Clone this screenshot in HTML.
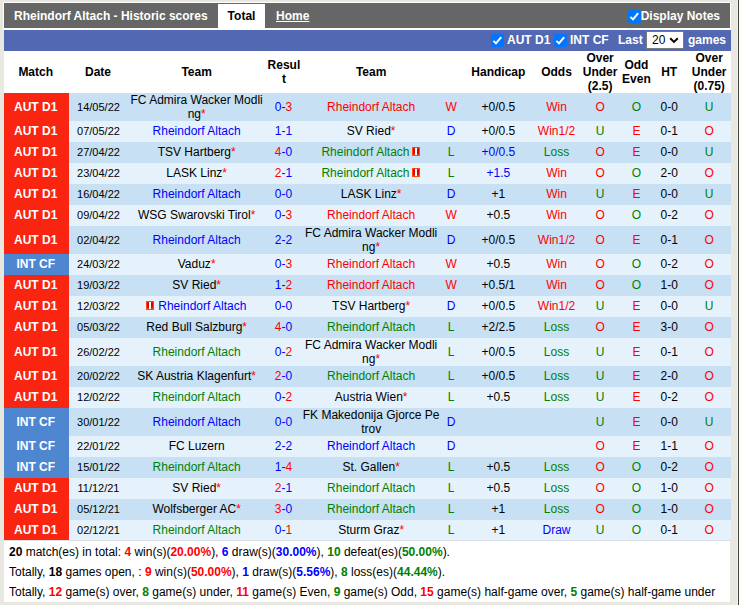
<!DOCTYPE html>
<html><head><meta charset="utf-8"><style>
html,body{margin:0;padding:0;}
body{width:739px;height:605px;background:#e8e8e0;position:relative;overflow:hidden;font-family:"Liberation Sans",sans-serif;font-size:12px;color:#000;}
.edge1{position:absolute;left:737px;top:0;width:1px;height:605px;background:#f4f4ef;}
.edge2{position:absolute;left:738px;top:0;width:1px;height:605px;background:#45453f;}
.tw{position:absolute;left:3px;top:2px;width:728px;height:28px;background:#fff;}
.title{position:absolute;left:4px;top:3px;width:726px;height:25px;background:#666;color:#fff;font-weight:bold;}
.title .nm{position:absolute;left:10px;top:6px;line-height:14px;}
.tab{position:absolute;left:214px;top:1px;width:47px;height:26px;background:#fff;color:#000;text-align:center;line-height:14px;}
.tab span{position:absolute;left:0;right:0;top:5px;}
.home{position:absolute;left:272px;top:6px;line-height:14px;text-decoration:underline;}
.dn{position:absolute;right:10px;top:6px;line-height:14px;}
.cb{display:inline-block;width:13px;height:13px;background:#0075ff;border-radius:2px;vertical-align:top;position:relative;}
.cb svg{position:absolute;left:0;top:0;}
.dn .cb{position:absolute;left:-13px;top:1px;}
.bar{position:absolute;left:4px;top:30px;width:727px;height:21px;background:#5368b3;color:#fff;font-weight:bold;}
.bar .it{position:absolute;top:3px;line-height:14px;}
.sel{position:absolute;left:642px;top:1px;background:#fff;border:1px solid #7a7a7a;box-sizing:border-box;width:38px;height:18px;}
.sel .v{position:absolute;left:5px;top:1px;font-weight:normal;color:#000;line-height:14px;}
.sel svg{position:absolute;left:22px;top:5px;}
table{position:absolute;left:4px;top:51px;width:727px;border-collapse:collapse;table-layout:fixed;}
td,th{padding:0;text-align:center;line-height:14px;vertical-align:middle;}
th{font-weight:bold;height:42px;background:#fff;overflow-wrap:anywhere;}
th:first-child{padding-right:2px;}
th:nth-child(2){padding-right:1px;}
tr.d td{background:#c7e0f4;}
tr.l td{background:#e6f2fb;}
tr td{height:20px;padding-bottom:1px;}
tr.t td{height:28px;padding-bottom:0;}
td.tm{word-break:break-all;}
td.dt{font-size:11px;}
tr td.aut{background:#f92511;color:#fff;font-weight:bold;padding-right:2px;}
tr td.int{background:#4f86d0;color:#fff;font-weight:bold;padding-right:2px;}
td.sc{color:#0000ff;padding-right:1px;}
.c-r{color:#ff0000;}
.c-b{color:#0000ff;}
.c-g{color:#008000;}
.c-k{color:#000;}
.card{display:inline-block;width:8px;height:9px;background:linear-gradient(#ff5a10 0,#d80000 22%,#dc0400 65%,#ff5a00 100%);box-shadow:inset 1px 0 0 #ff4a10,inset -1px 0 0 #ff4a10;position:relative;left:-1px;vertical-align:0px;}
.card:after{content:"";position:absolute;left:3px;top:1px;width:2px;height:7px;background:#fff;}
.sum{position:absolute;left:4px;top:541px;width:726px;height:61px;background:#fff;}
.sline{position:absolute;left:4px;top:540px;width:727px;height:1px;background:#d9dfe4;}
.sum div{position:absolute;left:5px;line-height:14px;white-space:nowrap;}
.sum b{font-weight:bold;}
</style></head><body>
<div class="edge1"></div><div class="edge2"></div>
<div class="tw"></div>
<div class="title"><span class="nm">Rheindorf Altach - Historic scores</span><div class="tab"><span>Total</span></div><span class="home">Home</span><span class="dn"><span class="cb"><svg width="13" height="13" viewBox="0 0 13 13"><path d="M2.4 6.9 L5 9.4 L10.2 3.1" stroke="#fff" stroke-width="2" fill="none"/></svg></span>Display Notes</span></div>
<div class="bar">
<span class="it" style="left:487px;top:4px"><span class="cb"><svg width="13" height="13" viewBox="0 0 13 13"><path d="M2.4 6.9 L5 9.4 L10.2 3.1" stroke="#fff" stroke-width="2" fill="none"/></svg></span></span><span class="it" style="left:503px">AUT D1</span>
<span class="it" style="left:550px;top:4px"><span class="cb"><svg width="13" height="13" viewBox="0 0 13 13"><path d="M2.4 6.9 L5 9.4 L10.2 3.1" stroke="#fff" stroke-width="2" fill="none"/></svg></span></span><span class="it" style="left:566px">INT CF</span>
<span class="it" style="left:614px">Last</span>
<div class="sel"><span class="v">20</span><svg width="10" height="7" viewBox="0 0 10 7"><path d="M1.2 1.2 L5 4.9 L8.8 1.2" stroke="#000" stroke-width="1.9" fill="none"/></svg></div>
<span class="it" style="left:684px">games</span>
</div>
<table>
<colgroup><col style="width:9%"><col style="width:8%"><col style="width:19%"><col style="width:5%"><col style="width:19%"><col style="width:3%"><col style="width:10%"><col style="width:6%"><col style="width:6%"><col style="width:4%"><col style="width:5%"><col style="width:6%"></colgroup>
<tr><th>Match</th><th>Date</th><th>Team</th><th>Result</th><th>Team</th><th></th><th>Handicap</th><th>Odds</th><th>Over Under (2.5)</th><th>Odd Even</th><th>HT</th><th>Over Under (0.75)</th></tr>
<tr class="d t"><td class="aut">AUT D1</td><td class="dt">14/05/22</td><td class="tm"><span class="c-k">FC Admira Wacker Modling</span><span class="c-r">*</span></td><td class="sc">0-<span class="c-r">3</span></td><td class="tm"><span class="c-r">Rheindorf Altach</span></td><td class="c-r">W</td><td class="">+0/0.5</td><td class="c-r">Win</td><td class="c-r">O</td><td class="c-g">O</td><td>0-0</td><td class="c-g">U</td></tr>
<tr class="l"><td class="aut">AUT D1</td><td class="dt">07/05/22</td><td class="tm"><span class="c-b">Rheindorf Altach</span></td><td class="sc">1-1</td><td class="tm"><span class="c-k">SV Ried</span><span class="c-r">*</span></td><td class="c-b">D</td><td class="">+0/0.5</td><td class="c-r">Win1/2</td><td class="c-g">U</td><td class="c-r">E</td><td>0-1</td><td class="c-r">O</td></tr>
<tr class="d"><td class="aut">AUT D1</td><td class="dt">27/04/22</td><td class="tm"><span class="c-k">TSV Hartberg</span><span class="c-r">*</span></td><td class="sc"><span class="c-r">4</span>-0</td><td class="tm"><span class="c-g">Rheindorf Altach</span> <i class="card"></i></td><td class="c-g">L</td><td class="c-b">+0/0.5</td><td class="c-g">Loss</td><td class="c-r">O</td><td class="c-r">E</td><td>0-0</td><td class="c-g">U</td></tr>
<tr class="l"><td class="aut">AUT D1</td><td class="dt">23/04/22</td><td class="tm"><span class="c-k">LASK Linz</span><span class="c-r">*</span></td><td class="sc"><span class="c-r">2</span>-1</td><td class="tm"><span class="c-g">Rheindorf Altach</span> <i class="card"></i></td><td class="c-g">L</td><td class="c-b">+1.5</td><td class="c-r">Win</td><td class="c-r">O</td><td class="c-g">O</td><td>2-0</td><td class="c-r">O</td></tr>
<tr class="d"><td class="aut">AUT D1</td><td class="dt">16/04/22</td><td class="tm"><span class="c-b">Rheindorf Altach</span></td><td class="sc">0-0</td><td class="tm"><span class="c-k">LASK Linz</span><span class="c-r">*</span></td><td class="c-b">D</td><td class="">+1</td><td class="c-r">Win</td><td class="c-g">U</td><td class="c-r">E</td><td>0-0</td><td class="c-g">U</td></tr>
<tr class="l"><td class="aut">AUT D1</td><td class="dt">09/04/22</td><td class="tm"><span class="c-k">WSG Swarovski Tirol</span><span class="c-r">*</span></td><td class="sc">0-<span class="c-r">3</span></td><td class="tm"><span class="c-r">Rheindorf Altach</span></td><td class="c-r">W</td><td class="">+0.5</td><td class="c-r">Win</td><td class="c-r">O</td><td class="c-g">O</td><td>0-2</td><td class="c-r">O</td></tr>
<tr class="d t"><td class="aut">AUT D1</td><td class="dt">02/04/22</td><td class="tm"><span class="c-b">Rheindorf Altach</span></td><td class="sc">2-2</td><td class="tm"><span class="c-k">FC Admira Wacker Modling</span><span class="c-r">*</span></td><td class="c-b">D</td><td class="">+0/0.5</td><td class="c-r">Win1/2</td><td class="c-r">O</td><td class="c-r">E</td><td>0-1</td><td class="c-r">O</td></tr>
<tr class="l"><td class="int">INT CF</td><td class="dt">24/03/22</td><td class="tm"><span class="c-k">Vaduz</span><span class="c-r">*</span></td><td class="sc">0-<span class="c-r">3</span></td><td class="tm"><span class="c-r">Rheindorf Altach</span></td><td class="c-r">W</td><td class="">+0.5</td><td class="c-r">Win</td><td class="c-r">O</td><td class="c-g">O</td><td>0-2</td><td class="c-r">O</td></tr>
<tr class="d"><td class="aut">AUT D1</td><td class="dt">19/03/22</td><td class="tm"><span class="c-k">SV Ried</span><span class="c-r">*</span></td><td class="sc">1-<span class="c-r">2</span></td><td class="tm"><span class="c-r">Rheindorf Altach</span></td><td class="c-r">W</td><td class="">+0.5/1</td><td class="c-r">Win</td><td class="c-r">O</td><td class="c-g">O</td><td>1-0</td><td class="c-r">O</td></tr>
<tr class="l"><td class="aut">AUT D1</td><td class="dt">12/03/22</td><td class="tm"><i class="card"></i> <span class="c-b">Rheindorf Altach</span></td><td class="sc">0-0</td><td class="tm"><span class="c-k">TSV Hartberg</span><span class="c-r">*</span></td><td class="c-b">D</td><td class="">+0/0.5</td><td class="c-r">Win1/2</td><td class="c-g">U</td><td class="c-r">E</td><td>0-0</td><td class="c-g">U</td></tr>
<tr class="d"><td class="aut">AUT D1</td><td class="dt">05/03/22</td><td class="tm"><span class="c-k">Red Bull Salzburg</span><span class="c-r">*</span></td><td class="sc"><span class="c-r">4</span>-0</td><td class="tm"><span class="c-g">Rheindorf Altach</span></td><td class="c-g">L</td><td class="">+2/2.5</td><td class="c-g">Loss</td><td class="c-r">O</td><td class="c-r">E</td><td>3-0</td><td class="c-r">O</td></tr>
<tr class="l t"><td class="aut">AUT D1</td><td class="dt">26/02/22</td><td class="tm"><span class="c-g">Rheindorf Altach</span></td><td class="sc">0-<span class="c-r">2</span></td><td class="tm"><span class="c-k">FC Admira Wacker Modling</span><span class="c-r">*</span></td><td class="c-g">L</td><td class="">+0/0.5</td><td class="c-g">Loss</td><td class="c-g">U</td><td class="c-r">E</td><td>0-1</td><td class="c-r">O</td></tr>
<tr class="d"><td class="aut">AUT D1</td><td class="dt">20/02/22</td><td class="tm"><span class="c-k">SK Austria Klagenfurt</span><span class="c-r">*</span></td><td class="sc"><span class="c-r">2</span>-0</td><td class="tm"><span class="c-g">Rheindorf Altach</span></td><td class="c-g">L</td><td class="">+0/0.5</td><td class="c-g">Loss</td><td class="c-g">U</td><td class="c-r">E</td><td>2-0</td><td class="c-r">O</td></tr>
<tr class="l"><td class="aut">AUT D1</td><td class="dt">12/02/22</td><td class="tm"><span class="c-g">Rheindorf Altach</span></td><td class="sc">0-<span class="c-r">2</span></td><td class="tm"><span class="c-k">Austria Wien</span><span class="c-r">*</span></td><td class="c-g">L</td><td class="">+0.5</td><td class="c-g">Loss</td><td class="c-g">U</td><td class="c-r">E</td><td>0-2</td><td class="c-r">O</td></tr>
<tr class="d t"><td class="int">INT CF</td><td class="dt">30/01/22</td><td class="tm"><span class="c-b">Rheindorf Altach</span></td><td class="sc">0-0</td><td class="tm"><span class="c-k">FK Makedonija Gjorce Petrov</span></td><td class="c-b">D</td><td class=""></td><td class="c-k"></td><td class="c-g">U</td><td class="c-r">E</td><td>0-0</td><td class="c-g">U</td></tr>
<tr class="l"><td class="int">INT CF</td><td class="dt">22/01/22</td><td class="tm"><span class="c-k">FC Luzern</span></td><td class="sc">2-2</td><td class="tm"><span class="c-b">Rheindorf Altach</span></td><td class="c-b">D</td><td class=""></td><td class="c-k"></td><td class="c-r">O</td><td class="c-r">E</td><td>1-1</td><td class="c-r">O</td></tr>
<tr class="d"><td class="int">INT CF</td><td class="dt">15/01/22</td><td class="tm"><span class="c-g">Rheindorf Altach</span></td><td class="sc">1-<span class="c-r">4</span></td><td class="tm"><span class="c-k">St. Gallen</span><span class="c-r">*</span></td><td class="c-g">L</td><td class="">+0.5</td><td class="c-g">Loss</td><td class="c-r">O</td><td class="c-g">O</td><td>0-2</td><td class="c-r">O</td></tr>
<tr class="l"><td class="aut">AUT D1</td><td class="dt">11/12/21</td><td class="tm"><span class="c-k">SV Ried</span><span class="c-r">*</span></td><td class="sc"><span class="c-r">2</span>-1</td><td class="tm"><span class="c-g">Rheindorf Altach</span></td><td class="c-g">L</td><td class="">+0.5</td><td class="c-g">Loss</td><td class="c-r">O</td><td class="c-g">O</td><td>1-0</td><td class="c-r">O</td></tr>
<tr class="d"><td class="aut">AUT D1</td><td class="dt">05/12/21</td><td class="tm"><span class="c-k">Wolfsberger AC</span><span class="c-r">*</span></td><td class="sc"><span class="c-r">3</span>-0</td><td class="tm"><span class="c-g">Rheindorf Altach</span></td><td class="c-g">L</td><td class="">+1</td><td class="c-g">Loss</td><td class="c-r">O</td><td class="c-g">O</td><td>1-0</td><td class="c-r">O</td></tr>
<tr class="l"><td class="aut">AUT D1</td><td class="dt">02/12/21</td><td class="tm"><span class="c-g">Rheindorf Altach</span></td><td class="sc">0-<span class="c-r">1</span></td><td class="tm"><span class="c-k">Sturm Graz</span><span class="c-r">*</span></td><td class="c-g">L</td><td class="">+1</td><td class="c-b">Draw</td><td class="c-g">U</td><td class="c-g">O</td><td>0-1</td><td class="c-r">O</td></tr>
</table>
<div class="sline"></div>
<div class="sum">
<div style="top:4px"><b>20</b> match(es) in total: <b class="c-r">4</b> win(s)(<b class="c-r">20.00%</b>), <b class="c-b">6</b> draw(s)(<b class="c-b">30.00%</b>), <b class="c-g">10</b> defeat(es)(<b class="c-g">50.00%</b>).</div>
<div style="top:24px">Totally, <b>18</b> games open, : <b class="c-r">9</b> win(s)(<b class="c-r">50.00%</b>), <b class="c-b">1</b> draw(s)(<b class="c-b">5.56%</b>), <b class="c-g">8</b> loss(es)(<b class="c-g">44.44%</b>).</div>
<div style="top:44px">Totally, <b class="c-r">12</b> game(s) over, <b class="c-g">8</b> game(s) under, <b class="c-r">11</b> game(s) Even, <b class="c-g">9</b> game(s) Odd, <b class="c-r">15</b> game(s) half-game over, <b class="c-g">5</b> game(s) half-game under</div>
</div>
</body></html>
